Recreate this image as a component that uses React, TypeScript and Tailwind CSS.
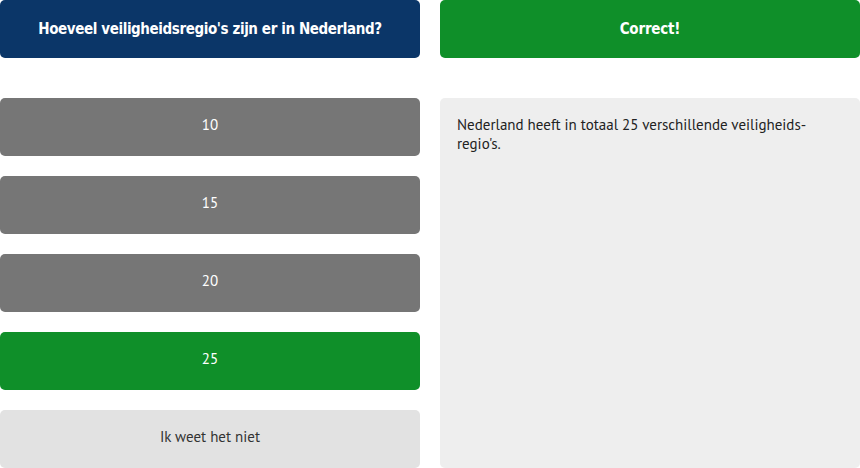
const answers = [
  { label: "10", state: "wrong" },
  { label: "15", state: "wrong" },
  { label: "20", state: "wrong" },
  { label: "25", state: "correct" },
];

const App = () => {
  return (
    <div className="w-[860px] h-[468px] bg-white flex gap-5 font-['PT_Sans','Noto_Sans',sans-serif]">
      <div className="w-[420px] flex flex-col">
        <div className="h-[58px] bg-[#0b3668] rounded-[5px] flex items-center justify-center text-white text-[15px] font-bold font-['DejaVu_Sans_Condensed','DejaVu_Sans',sans-serif] tracking-[-0.4px]">
          Hoeveel veiligheidsregio's zijn er in Nederland?
        </div>
        <div className="mt-10 flex flex-col gap-5">
          {answers.map((a, i) => (
            <div
              key={i}
              className={`h-[58px] rounded-[5px] flex items-center justify-center pb-[3px] text-white text-[15px] ${
                a.state === "correct" ? "bg-[#0f8f29]" : "bg-[#767676]"
              }`}
            >
              {a.label}
            </div>
          ))}
          <div className="h-[58px] rounded-[5px] flex items-center justify-center pb-[3px] bg-[#e2e2e2] text-[#333] text-[15px]">
            Ik weet het niet
          </div>
        </div>
      </div>
      <div className="w-[420px] flex flex-col">
        <div className="h-[58px] bg-[#0f8f29] rounded-[5px] flex items-center justify-center text-white text-[15px] font-bold font-['DejaVu_Sans_Condensed','DejaVu_Sans',sans-serif] tracking-[-0.2px]">
          Correct!
        </div>
        <div className="mt-10 flex-1 bg-[#eeeeee] rounded-[5px] px-[17px] py-[17px] text-[15px] leading-[19px] text-[#222]">
          Nederland heeft in totaal 25 verschillende veiligheids{"\u00AD"}regio's.
        </div>
      </div>
    </div>
  );
};

export default App;
